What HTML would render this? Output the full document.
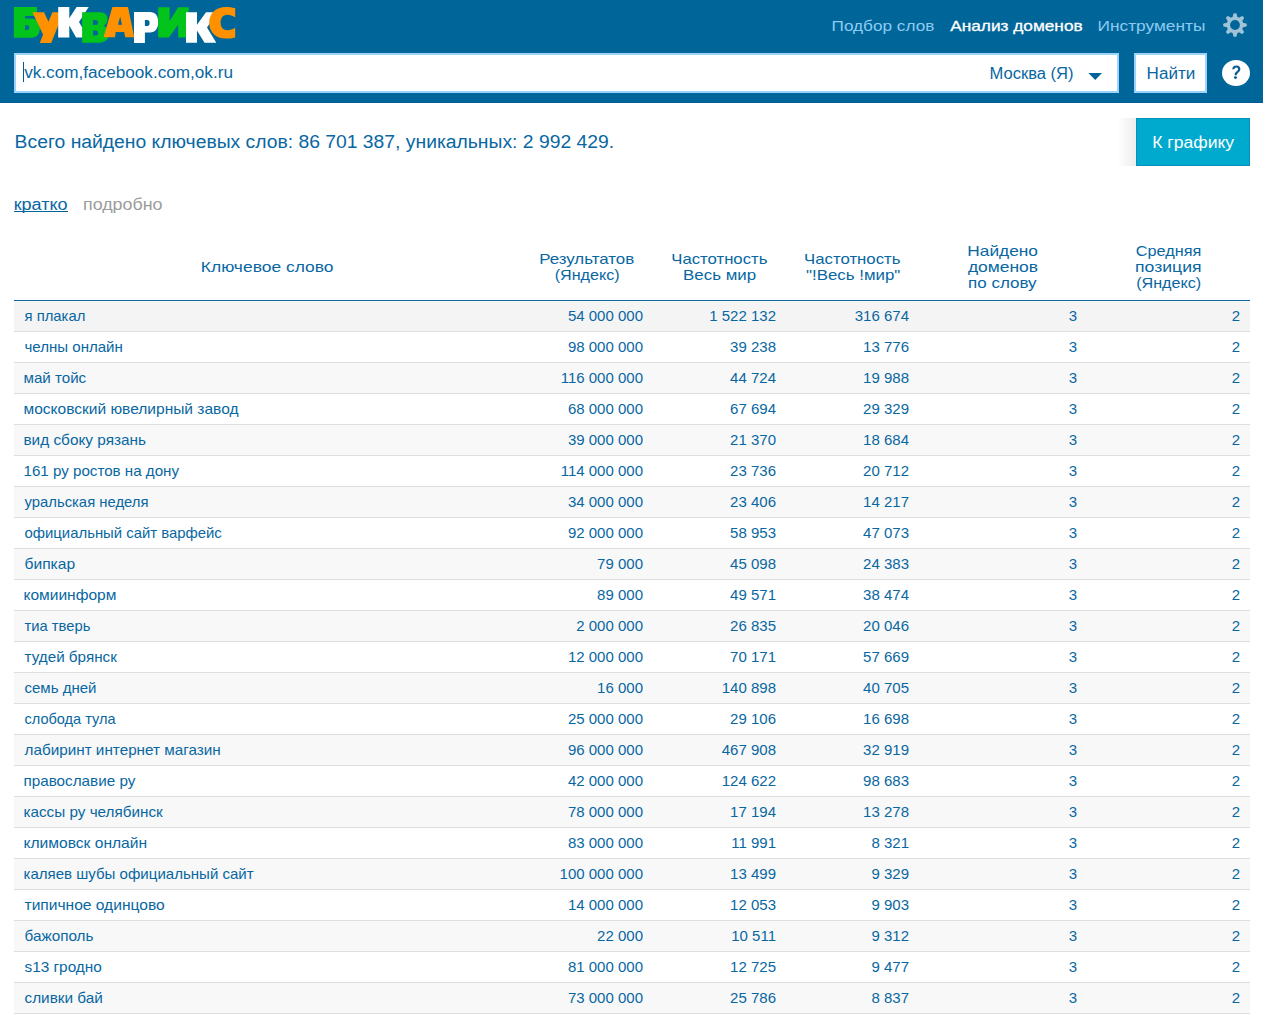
<!DOCTYPE html><html><head><meta charset="utf-8"><style>
*{margin:0;padding:0;box-sizing:border-box}
html,body{width:1263px;height:1021px;overflow:hidden;background:#fff}
body{font-family:"Liberation Sans",sans-serif;color:#0867a2;position:relative}
.a{position:absolute;white-space:nowrap}
#hdr{position:absolute;left:0;top:0;width:1263px;height:103px;background:#006699;border-bottom:1px solid #005b90}
.inp{position:absolute;background:#fff;border:2px solid #9ad3fc}
.row{position:absolute;left:14px;width:1236px;height:31px;border-bottom:1px solid #dedede}
.row.o{background:#f8f8f8}
.row.h{background:#f4f4f4}
.c{position:absolute;top:0;line-height:30px;font-size:15px;white-space:nowrap}
.r{text-align:right}
svg text{font-family:"Liberation Sans";white-space:pre}
</style></head><body>
<div id="hdr">
<svg class="a" style="left:0;top:0" width="260" height="50" viewBox="0 0 260 50"><path fill="#02c41a" fill-rule="evenodd" d="M13.9,7 H37 V15.9 H25 V18.4 H31.5 C36.8,18.4 39.8,22 39.8,28 C39.8,34 36.8,37.8 31.5,37.8 H13.9 Z M25,25.2 H27.3 Q29.4,25.2 29.4,27.55 Q29.4,29.9 27.3,29.9 H25 Z"/><path fill="#ff9100" fill-rule="evenodd" d="M32.4,12.2 L44,12.2 L48.5,21.7 L52.4,12.2 L63.5,12.2 L51.2,42.9 L39.8,42.9 L43.1,34.5 Z"/><path fill="#ffffff" fill-rule="evenodd" d="M58.2,7.1 H69.3 V18.3 L76.6,7.1 H88.7 L79,22 L87.9,37.5 H76.1 L69.3,25.6 V37.5 H58.2 Z"/><path fill="#02c41a" fill-rule="evenodd" d="M82.1,12.3 H99 C104.5,12.3 107.5,14.8 107.5,18.8 C107.5,22.3 105.8,24.6 103.5,25.9 C106.6,27 108.9,29.6 108.9,33.5 C108.9,39.3 105,42.7 99,42.7 H82.1 Z M93,19.9 H96 Q98,19.9 98,22.4 Q98,24.9 96,24.9 H93 Z M93,30.6 H96 Q98.2,30.6 98.2,33.1 Q98.2,35.6 96,35.6 H93 Z"/><path fill="#ff9100" fill-rule="evenodd" d="M112.4,7.1 H128 L134.2,37.3 H125.2 L124.2,32 H115.7 L115,37.3 H103.6 Z M120.2,16.4 L122,24.7 H118 Z"/><path fill="#ffffff" fill-rule="evenodd" d="M134,12.1 H150 C155.2,12.1 158.2,15.6 158.2,22.2 C158.2,28.6 155.2,32.5 150,32.5 H144.9 V43 H134 Z M144.9,19.9 H147.3 Q149.6,19.9 149.6,22.9 Q149.6,25.9 147.3,25.9 H144.9 Z"/><path fill="#02c41a" fill-rule="evenodd" d="M158.2,7.2 H169.6 V21.1 L178.2,7.2 H188.8 V37.5 H178.2 V24.7 L168.9,37.5 H158.2 Z"/><path fill="#ffffff" fill-rule="evenodd" d="M186,12.2 H197 V24.7 L206,12.2 H217 L207,27.5 L216.3,42.8 H204.5 L197,30.4 V42.8 H186 Z"/><path fill="#ff9100" fill-rule="evenodd" d="M235.2,8.2 V17.5 C233,15.6 229.8,14.7 227.2,14.7 C222.8,14.7 220.6,18.3 220.6,22.6 C220.6,27 222.8,30.3 227.2,30.3 C229.8,30.3 233,29.4 235.2,27.8 V37.4 C232,38.3 229,38.6 226,38.6 C215.5,38.6 209.2,32 209.2,22.8 C209.2,13.5 215.5,7 226,7 C229,7 232,7.3 235.2,8.2 Z"/></svg>
<svg class="a" style="left:1223px;top:13px" width="24" height="24" viewBox="0 0 24 24"><path fill-rule="evenodd" fill="#a0c3d8" d="M9.63,4.05 L10.51,0.60 Q12.00,-0.30 13.49,0.60 L14.37,4.05 Q15.25,4.15 15.95,4.70 L19.01,2.88 Q20.70,3.30 21.12,4.99 L19.30,8.05 Q19.85,8.75 19.95,9.63 L23.40,10.51 Q24.30,12.00 23.40,13.49 L19.95,14.37 Q19.85,15.25 19.30,15.95 L21.12,19.01 Q20.70,20.70 19.01,21.12 L15.95,19.30 Q15.25,19.85 14.37,19.95 L13.49,23.40 Q12.00,24.30 10.51,23.40 L9.63,19.95 Q8.75,19.85 8.05,19.30 L4.99,21.12 Q3.30,20.70 2.88,19.01 L4.70,15.95 Q4.15,15.25 4.05,14.37 L0.60,13.49 Q-0.30,12.00 0.60,10.51 L4.05,9.63 Q4.15,8.75 4.70,8.05 L2.88,4.99 Q3.30,3.30 4.99,2.88 L8.05,4.70 Q8.75,4.15 9.63,4.05Z M12,7.1 A4.9,4.9 0 1,0 12,16.9 A4.9,4.9 0 1,0 12,7.1Z"/></svg>
<div class="inp" style="left:14px;top:53px;width:1105px;height:40px"></div>
<div class="a" style="left:23px;top:62px;width:1px;height:20px;background:#0a5a8a"></div>
<svg class="a" style="left:1088px;top:73px" width="15" height="8"><path d="M0.4,0 L14,0 L7.2,6.9Z" fill="#00649b"/></svg>
<div class="inp" style="left:1134px;top:53px;width:73px;height:40px"></div>
<div class="a" style="left:1222px;top:60px;width:28px;height:26px;border-radius:50%;background:#fff"></div>
<svg class="a" style="left:1220px;top:58px" width="32" height="32" viewBox="1220 58 32 32"><path d="M1233.3,69.3 C1233.4,67.4 1234.7,66.5 1236.3,66.5 C1238.2,66.5 1239.3,67.6 1239.3,69.2 C1239.3,70.9 1238.1,71.7 1237,72.5 C1235.9,73.3 1235.6,73.9 1235.6,75.2" fill="none" stroke="#0b5d91" stroke-width="2.2"/><ellipse cx="1235.5" cy="77.6" rx="1.55" ry="1.35" fill="#0b5d91"/></svg>
</div>
<div class="a" style="left:1117px;top:118px;width:19px;height:48px;background:linear-gradient(to right,rgba(0,0,0,0),rgba(0,0,0,0.075))"></div>
<div class="a" style="left:1136px;top:118px;width:114px;height:48px;background:#00aacf;border:1px solid #078fb9"></div>
<div class="a" style="left:14px;top:211px;width:54px;height:1px;background:#006699"></div>
<div class="a" style="left:14px;top:300px;width:1236px;height:1px;background:#0f6aa0"></div>
<div class="row h" style="top:301px">
<div class="c r" style="left:506px;width:123px">54 000 000</div>
<div class="c r" style="left:639px;width:123px">1 522 132</div>
<div class="c r" style="left:772px;width:123px">316 674</div>
<div class="c r" style="left:905px;width:158px">3</div>
<div class="c r" style="left:1073px;width:153px">2</div>
</div>
<div class="row" style="top:332px">
<div class="c r" style="left:506px;width:123px">98 000 000</div>
<div class="c r" style="left:639px;width:123px">39 238</div>
<div class="c r" style="left:772px;width:123px">13 776</div>
<div class="c r" style="left:905px;width:158px">3</div>
<div class="c r" style="left:1073px;width:153px">2</div>
</div>
<div class="row o" style="top:363px">
<div class="c r" style="left:506px;width:123px">116 000 000</div>
<div class="c r" style="left:639px;width:123px">44 724</div>
<div class="c r" style="left:772px;width:123px">19 988</div>
<div class="c r" style="left:905px;width:158px">3</div>
<div class="c r" style="left:1073px;width:153px">2</div>
</div>
<div class="row" style="top:394px">
<div class="c r" style="left:506px;width:123px">68 000 000</div>
<div class="c r" style="left:639px;width:123px">67 694</div>
<div class="c r" style="left:772px;width:123px">29 329</div>
<div class="c r" style="left:905px;width:158px">3</div>
<div class="c r" style="left:1073px;width:153px">2</div>
</div>
<div class="row o" style="top:425px">
<div class="c r" style="left:506px;width:123px">39 000 000</div>
<div class="c r" style="left:639px;width:123px">21 370</div>
<div class="c r" style="left:772px;width:123px">18 684</div>
<div class="c r" style="left:905px;width:158px">3</div>
<div class="c r" style="left:1073px;width:153px">2</div>
</div>
<div class="row" style="top:456px">
<div class="c r" style="left:506px;width:123px">114 000 000</div>
<div class="c r" style="left:639px;width:123px">23 736</div>
<div class="c r" style="left:772px;width:123px">20 712</div>
<div class="c r" style="left:905px;width:158px">3</div>
<div class="c r" style="left:1073px;width:153px">2</div>
</div>
<div class="row o" style="top:487px">
<div class="c r" style="left:506px;width:123px">34 000 000</div>
<div class="c r" style="left:639px;width:123px">23 406</div>
<div class="c r" style="left:772px;width:123px">14 217</div>
<div class="c r" style="left:905px;width:158px">3</div>
<div class="c r" style="left:1073px;width:153px">2</div>
</div>
<div class="row" style="top:518px">
<div class="c r" style="left:506px;width:123px">92 000 000</div>
<div class="c r" style="left:639px;width:123px">58 953</div>
<div class="c r" style="left:772px;width:123px">47 073</div>
<div class="c r" style="left:905px;width:158px">3</div>
<div class="c r" style="left:1073px;width:153px">2</div>
</div>
<div class="row o" style="top:549px">
<div class="c r" style="left:506px;width:123px">79 000</div>
<div class="c r" style="left:639px;width:123px">45 098</div>
<div class="c r" style="left:772px;width:123px">24 383</div>
<div class="c r" style="left:905px;width:158px">3</div>
<div class="c r" style="left:1073px;width:153px">2</div>
</div>
<div class="row" style="top:580px">
<div class="c r" style="left:506px;width:123px">89 000</div>
<div class="c r" style="left:639px;width:123px">49 571</div>
<div class="c r" style="left:772px;width:123px">38 474</div>
<div class="c r" style="left:905px;width:158px">3</div>
<div class="c r" style="left:1073px;width:153px">2</div>
</div>
<div class="row o" style="top:611px">
<div class="c r" style="left:506px;width:123px">2 000 000</div>
<div class="c r" style="left:639px;width:123px">26 835</div>
<div class="c r" style="left:772px;width:123px">20 046</div>
<div class="c r" style="left:905px;width:158px">3</div>
<div class="c r" style="left:1073px;width:153px">2</div>
</div>
<div class="row" style="top:642px">
<div class="c r" style="left:506px;width:123px">12 000 000</div>
<div class="c r" style="left:639px;width:123px">70 171</div>
<div class="c r" style="left:772px;width:123px">57 669</div>
<div class="c r" style="left:905px;width:158px">3</div>
<div class="c r" style="left:1073px;width:153px">2</div>
</div>
<div class="row o" style="top:673px">
<div class="c r" style="left:506px;width:123px">16 000</div>
<div class="c r" style="left:639px;width:123px">140 898</div>
<div class="c r" style="left:772px;width:123px">40 705</div>
<div class="c r" style="left:905px;width:158px">3</div>
<div class="c r" style="left:1073px;width:153px">2</div>
</div>
<div class="row" style="top:704px">
<div class="c r" style="left:506px;width:123px">25 000 000</div>
<div class="c r" style="left:639px;width:123px">29 106</div>
<div class="c r" style="left:772px;width:123px">16 698</div>
<div class="c r" style="left:905px;width:158px">3</div>
<div class="c r" style="left:1073px;width:153px">2</div>
</div>
<div class="row o" style="top:735px">
<div class="c r" style="left:506px;width:123px">96 000 000</div>
<div class="c r" style="left:639px;width:123px">467 908</div>
<div class="c r" style="left:772px;width:123px">32 919</div>
<div class="c r" style="left:905px;width:158px">3</div>
<div class="c r" style="left:1073px;width:153px">2</div>
</div>
<div class="row" style="top:766px">
<div class="c r" style="left:506px;width:123px">42 000 000</div>
<div class="c r" style="left:639px;width:123px">124 622</div>
<div class="c r" style="left:772px;width:123px">98 683</div>
<div class="c r" style="left:905px;width:158px">3</div>
<div class="c r" style="left:1073px;width:153px">2</div>
</div>
<div class="row o" style="top:797px">
<div class="c r" style="left:506px;width:123px">78 000 000</div>
<div class="c r" style="left:639px;width:123px">17 194</div>
<div class="c r" style="left:772px;width:123px">13 278</div>
<div class="c r" style="left:905px;width:158px">3</div>
<div class="c r" style="left:1073px;width:153px">2</div>
</div>
<div class="row" style="top:828px">
<div class="c r" style="left:506px;width:123px">83 000 000</div>
<div class="c r" style="left:639px;width:123px">11 991</div>
<div class="c r" style="left:772px;width:123px">8 321</div>
<div class="c r" style="left:905px;width:158px">3</div>
<div class="c r" style="left:1073px;width:153px">2</div>
</div>
<div class="row o" style="top:859px">
<div class="c r" style="left:506px;width:123px">100 000 000</div>
<div class="c r" style="left:639px;width:123px">13 499</div>
<div class="c r" style="left:772px;width:123px">9 329</div>
<div class="c r" style="left:905px;width:158px">3</div>
<div class="c r" style="left:1073px;width:153px">2</div>
</div>
<div class="row" style="top:890px">
<div class="c r" style="left:506px;width:123px">14 000 000</div>
<div class="c r" style="left:639px;width:123px">12 053</div>
<div class="c r" style="left:772px;width:123px">9 903</div>
<div class="c r" style="left:905px;width:158px">3</div>
<div class="c r" style="left:1073px;width:153px">2</div>
</div>
<div class="row o" style="top:921px">
<div class="c r" style="left:506px;width:123px">22 000</div>
<div class="c r" style="left:639px;width:123px">10 511</div>
<div class="c r" style="left:772px;width:123px">9 312</div>
<div class="c r" style="left:905px;width:158px">3</div>
<div class="c r" style="left:1073px;width:153px">2</div>
</div>
<div class="row" style="top:952px">
<div class="c r" style="left:506px;width:123px">81 000 000</div>
<div class="c r" style="left:639px;width:123px">12 725</div>
<div class="c r" style="left:772px;width:123px">9 477</div>
<div class="c r" style="left:905px;width:158px">3</div>
<div class="c r" style="left:1073px;width:153px">2</div>
</div>
<div class="row o" style="top:983px">
<div class="c r" style="left:506px;width:123px">73 000 000</div>
<div class="c r" style="left:639px;width:123px">25 786</div>
<div class="c r" style="left:772px;width:123px">8 837</div>
<div class="c r" style="left:905px;width:158px">3</div>
<div class="c r" style="left:1073px;width:153px">2</div>
</div>
<svg class="a" style="left:0;top:0" width="1263" height="1021"><text x="831.55" y="31" font-size="15" font-weight="normal" fill="#8dcbf3" textLength="102.81" lengthAdjust="spacingAndGlyphs" >Подбор слов</text><text x="950.20" y="30.8" font-size="15" font-weight="normal" fill="#fff" textLength="132.46" lengthAdjust="spacingAndGlyphs" stroke="#fff" stroke-width="0.3">Анализ доменов</text><text x="1097.55" y="30.8" font-size="15" font-weight="normal" fill="#8dcbf3" textLength="107.75" lengthAdjust="spacingAndGlyphs" >Инструменты</text><text x="24.20" y="77.8" font-size="16" font-weight="normal" fill="#0867a2" textLength="208.76" lengthAdjust="spacingAndGlyphs" >vk.com,facebook.com,ok.ru</text><text x="989.57" y="79.1" font-size="16" font-weight="normal" fill="#0867a2" textLength="83.97" lengthAdjust="spacingAndGlyphs" >Москва (Я)</text><text x="1146.63" y="78.8" font-size="16" font-weight="normal" fill="#0867a2" textLength="48.67" lengthAdjust="spacingAndGlyphs" >Найти</text><text x="14.63" y="147.8" font-size="18" font-weight="normal" fill="#0867a2" textLength="599.45" lengthAdjust="spacingAndGlyphs" >Всего найдено ключевых слов: 86 701 387, уникальных: 2 992 429.</text><text x="1152.20" y="147.8" font-size="16" font-weight="normal" fill="#fff" textLength="81.90" lengthAdjust="spacingAndGlyphs" >К графику</text><text x="13.68" y="209.7" font-size="16" font-weight="normal" fill="#0867a2" textLength="53.81" lengthAdjust="spacingAndGlyphs" >кратко</text><text x="82.98" y="209.7" font-size="16" font-weight="normal" fill="#9c9c9c" textLength="79.50" lengthAdjust="spacingAndGlyphs" >подробно</text><text x="200.84" y="271.9" font-size="15" font-weight="normal" fill="#0867a2" textLength="132.66" lengthAdjust="spacingAndGlyphs" >Ключевое слово</text><text x="539.17" y="263.8" font-size="15" font-weight="normal" fill="#0867a2" textLength="94.99" lengthAdjust="spacingAndGlyphs" >Результатов</text><text x="554.70" y="279.6" font-size="15" font-weight="normal" fill="#0867a2" textLength="64.89" lengthAdjust="spacingAndGlyphs" >(Яндекс)</text><text x="671.29" y="263.8" font-size="15" font-weight="normal" fill="#0867a2" textLength="96.11" lengthAdjust="spacingAndGlyphs" >Частотность</text><text x="683.07" y="279.6" font-size="15" font-weight="normal" fill="#0867a2" textLength="73.01" lengthAdjust="spacingAndGlyphs" >Весь мир</text><text x="804.08" y="263.8" font-size="15" font-weight="normal" fill="#0867a2" textLength="96.41" lengthAdjust="spacingAndGlyphs" >Частотность</text><text x="806.00" y="279.6" font-size="15" font-weight="normal" fill="#0867a2" textLength="94.27" lengthAdjust="spacingAndGlyphs" >&quot;!Весь !мир&quot;</text><text x="967.35" y="255.8" font-size="15" font-weight="normal" fill="#0867a2" textLength="70.55" lengthAdjust="spacingAndGlyphs" >Найдено</text><text x="967.90" y="271.5" font-size="15" font-weight="normal" fill="#0867a2" textLength="70.06" lengthAdjust="spacingAndGlyphs" >доменов</text><text x="968.07" y="287.6" font-size="15" font-weight="normal" fill="#0867a2" textLength="68.47" lengthAdjust="spacingAndGlyphs" >по слову</text><text x="1135.80" y="255.6" font-size="15" font-weight="normal" fill="#0867a2" textLength="65.53" lengthAdjust="spacingAndGlyphs" >Средняя</text><text x="1135.03" y="271.6" font-size="15" font-weight="normal" fill="#0867a2" textLength="66.52" lengthAdjust="spacingAndGlyphs" >позиция</text><text x="1136.20" y="287.5" font-size="15" font-weight="normal" fill="#0867a2" textLength="64.99" lengthAdjust="spacingAndGlyphs" >(Яндекс)</text><text x="24.50" y="321" font-size="15" font-weight="normal" fill="#0867a2" textLength="60.84" lengthAdjust="spacingAndGlyphs" >я плакал</text><text x="24.50" y="352" font-size="15" font-weight="normal" fill="#0867a2" textLength="98.28" lengthAdjust="spacingAndGlyphs" >челны онлайн</text><text x="23.49" y="383" font-size="15" font-weight="normal" fill="#0867a2" textLength="62.70" lengthAdjust="spacingAndGlyphs" >май тойс</text><text x="23.46" y="414" font-size="15" font-weight="normal" fill="#0867a2" textLength="215.08" lengthAdjust="spacingAndGlyphs" >московский ювелирный завод</text><text x="23.48" y="445" font-size="15" font-weight="normal" fill="#0867a2" textLength="122.53" lengthAdjust="spacingAndGlyphs" >вид сбоку рязань</text><text x="23.49" y="476" font-size="15" font-weight="normal" fill="#0867a2" textLength="155.50" lengthAdjust="spacingAndGlyphs" >161 ру ростов на дону</text><text x="24.50" y="507" font-size="15" font-weight="normal" fill="#0867a2" textLength="124.02" lengthAdjust="spacingAndGlyphs" >уральская неделя</text><text x="24.50" y="538" font-size="15" font-weight="normal" fill="#0867a2" textLength="197.30" lengthAdjust="spacingAndGlyphs" >официальный сайт варфейс</text><text x="24.50" y="569" font-size="15" font-weight="normal" fill="#0867a2" textLength="50.66" lengthAdjust="spacingAndGlyphs" >бипкар</text><text x="23.46" y="600" font-size="15" font-weight="normal" fill="#0867a2" textLength="92.96" lengthAdjust="spacingAndGlyphs" >комиинформ</text><text x="24.50" y="631" font-size="15" font-weight="normal" fill="#0867a2" textLength="65.82" lengthAdjust="spacingAndGlyphs" >тиа тверь</text><text x="24.50" y="662" font-size="15" font-weight="normal" fill="#0867a2" textLength="92.36" lengthAdjust="spacingAndGlyphs" >тудей брянск</text><text x="24.50" y="693" font-size="15" font-weight="normal" fill="#0867a2" textLength="71.98" lengthAdjust="spacingAndGlyphs" >семь дней</text><text x="24.50" y="724" font-size="15" font-weight="normal" fill="#0867a2" textLength="90.96" lengthAdjust="spacingAndGlyphs" >слобода тула</text><text x="24.50" y="755" font-size="15" font-weight="normal" fill="#0867a2" textLength="196.29" lengthAdjust="spacingAndGlyphs" >лабиринт интернет магазин</text><text x="23.48" y="786" font-size="15" font-weight="normal" fill="#0867a2" textLength="111.91" lengthAdjust="spacingAndGlyphs" >православие ру</text><text x="23.48" y="817" font-size="15" font-weight="normal" fill="#0867a2" textLength="139.27" lengthAdjust="spacingAndGlyphs" >кассы ру челябинск</text><text x="23.46" y="848" font-size="15" font-weight="normal" fill="#0867a2" textLength="123.63" lengthAdjust="spacingAndGlyphs" >климовск онлайн</text><text x="23.50" y="879" font-size="15" font-weight="normal" fill="#0867a2" textLength="230.17" lengthAdjust="spacingAndGlyphs" >каляев шубы официальный сайт</text><text x="24.50" y="910" font-size="15" font-weight="normal" fill="#0867a2" textLength="140.16" lengthAdjust="spacingAndGlyphs" >типичное одинцово</text><text x="24.50" y="941" font-size="15" font-weight="normal" fill="#0867a2" textLength="69.01" lengthAdjust="spacingAndGlyphs" >бажополь</text><text x="24.50" y="972" font-size="15" font-weight="normal" fill="#0867a2" textLength="77.35" lengthAdjust="spacingAndGlyphs" >s13 гродно</text><text x="24.50" y="1003" font-size="15" font-weight="normal" fill="#0867a2" textLength="78.39" lengthAdjust="spacingAndGlyphs" >сливки бай</text></svg>
</body></html>
